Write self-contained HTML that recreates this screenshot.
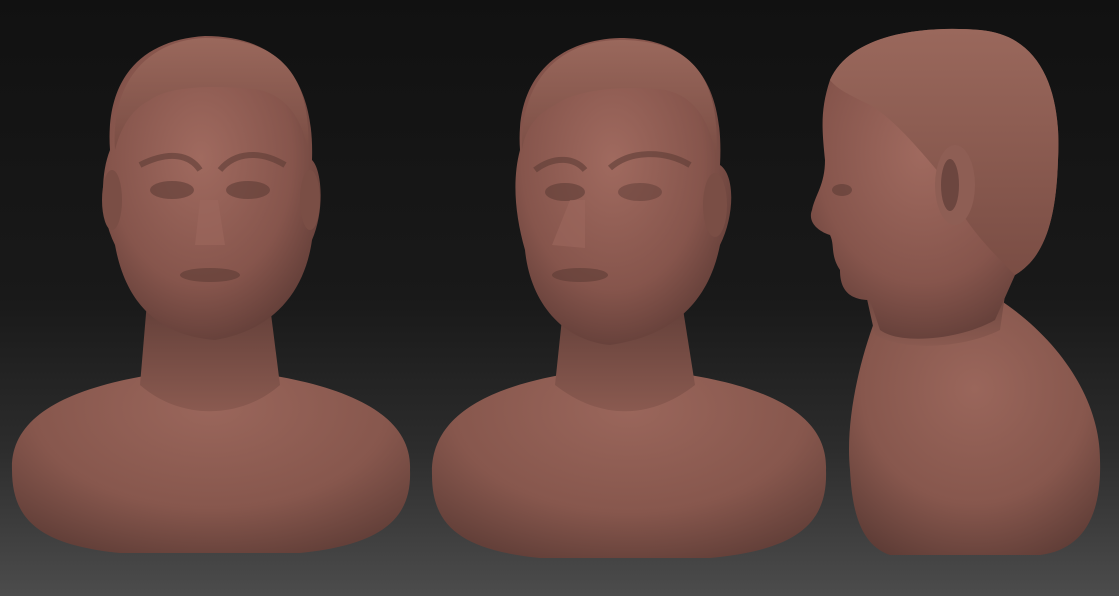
<!DOCTYPE html>
<html><head><meta charset="utf-8"><style>
html,body{margin:0;padding:0;width:1119px;height:596px;overflow:hidden;background:#111}
svg{display:block}
</style></head><body>
<svg width="1119" height="596" viewBox="0 0 1119 596" xmlns="http://www.w3.org/2000/svg">
<defs>
<linearGradient id="bg" x1="0" y1="0" x2="0" y2="1">
<stop offset="0" stop-color="#111"/>
<stop offset="0.5" stop-color="#191919"/>
<stop offset="0.75" stop-color="#2c2c2c"/>
<stop offset="1" stop-color="#4c4c4c"/>
</linearGradient>
<radialGradient id="skin" cx="0.45" cy="0.4" r="0.7">
<stop offset="0" stop-color="#a06a5f"/>
<stop offset="0.6" stop-color="#86554c"/>
<stop offset="1" stop-color="#573732"/>
</radialGradient>
<radialGradient id="body" cx="0.5" cy="0.35" r="0.75">
<stop offset="0" stop-color="#9a665b"/>
<stop offset="0.6" stop-color="#87574d"/>
<stop offset="1" stop-color="#5c3b35"/>
</radialGradient>
<linearGradient id="neck" x1="0" y1="0" x2="0" y2="1">
<stop offset="0" stop-color="#5e3c36"/>
<stop offset="1" stop-color="#8a5a50"/>
</linearGradient>
<linearGradient id="hair" x1="0" y1="0" x2="0" y2="1">
<stop offset="0" stop-color="#9a685c"/>
<stop offset="1" stop-color="#7a4d44"/>
</linearGradient>
</defs>
<rect width="1119" height="596" fill="url(#bg)"/>

<!-- Bust 1 -->
<path d="M12,470 C10,420 60,390 150,375 L160,330 L260,330 L270,375 C360,390 412,420 410,470 C412,520 380,545 300,553 L120,553 C40,545 12,520 12,470Z" fill="url(#body)"/>
<path d="M148,290 L268,290 L280,385 C240,420 180,420 140,385Z" fill="url(#neck)"/>
<path d="M110,150 C105,80 140,40 205,36 C270,36 315,70 312,160 C322,170 325,210 312,240 C305,290 275,330 215,340 C155,335 125,300 115,245 C100,215 100,175 110,150Z" fill="url(#skin)"/>
<path d="M115,150 C110,80 150,40 205,38 C275,38 312,70 308,150 C300,110 280,95 260,90 C220,85 170,85 150,100 C130,110 120,130 115,150Z" fill="url(#hair)"/>
<path d="M140,165 C170,150 190,155 200,170 M220,170 C235,152 260,150 285,165" stroke="#5e3c36" stroke-width="6" fill="none" opacity="0.6"/>
<ellipse cx="172" cy="190" rx="22" ry="9" fill="#5e3c36" opacity="0.6"/>
<ellipse cx="248" cy="190" rx="22" ry="9" fill="#5e3c36" opacity="0.6"/>
<path d="M200,200 L195,245 L225,245 L218,200Z" fill="#9c685d" opacity="0.6"/>
<ellipse cx="210" cy="275" rx="30" ry="7" fill="#5e3c36" opacity="0.6"/>
<ellipse cx="112" cy="200" rx="10" ry="30" fill="#7a4e45"/>
<ellipse cx="310" cy="200" rx="10" ry="30" fill="#7a4e45"/>

<!-- Bust 2 -->
<path d="M432,475 C430,420 480,390 560,375 L575,330 L675,330 L690,375 C780,390 828,420 826,470 C828,525 795,550 710,558 L540,558 C460,550 432,525 432,475Z" fill="url(#body)"/>
<path d="M565,290 L680,290 L695,385 C650,420 600,420 555,385Z" fill="url(#neck)"/>
<path d="M520,150 C515,80 555,40 620,38 C685,38 725,75 720,165 C735,175 735,215 720,245 C710,295 680,335 610,345 C560,340 530,300 525,250 C515,215 512,180 520,150Z" fill="url(#skin)"/>
<path d="M522,150 C520,80 560,40 620,40 C690,40 722,75 716,160 C710,115 690,95 665,90 C620,85 575,90 555,105 C535,115 525,130 522,150Z" fill="url(#hair)"/>
<path d="M535,170 C555,155 575,158 585,170 M610,168 C630,150 665,150 690,165" stroke="#5e3c36" stroke-width="6" fill="none" opacity="0.6"/>
<ellipse cx="565" cy="192" rx="20" ry="9" fill="#5e3c36" opacity="0.6"/>
<ellipse cx="640" cy="192" rx="22" ry="9" fill="#5e3c36" opacity="0.5"/>
<path d="M570,200 L552,245 L585,248 L585,200Z" fill="#9c685d" opacity="0.6"/>
<ellipse cx="580" cy="275" rx="28" ry="7" fill="#5e3c36" opacity="0.6"/>
<ellipse cx="715" cy="205" rx="12" ry="32" fill="#7a4e45"/>

<!-- Bust 3 (profile) -->
<path d="M850,470 C845,420 860,360 875,320 L1000,300 C1060,340 1100,400 1100,460 C1102,520 1080,550 1040,555 L890,555 C860,545 852,510 850,470Z" fill="url(#body)"/>
<path d="M865,290 L1010,260 L1000,330 C960,350 900,350 875,335Z" fill="url(#neck)"/>
<path d="M830,80 C850,35 920,25 980,30 C1040,35 1062,90 1058,160 C1056,230 1040,260 1015,275 L995,320 C960,340 900,345 880,330 L870,300 C845,300 840,285 840,270 C830,255 835,245 830,235 C815,230 808,220 812,210 C815,195 825,185 825,160 C822,130 820,110 830,80Z" fill="url(#skin)"/>
<path d="M830,80 C850,35 920,25 980,30 C1040,35 1062,90 1058,160 C1056,230 1040,260 1015,275 C990,250 960,220 945,180 C920,150 895,120 870,105 C850,95 838,90 830,80Z" fill="url(#hair)"/>
<ellipse cx="955" cy="185" rx="20" ry="40" fill="#8e5e54"/>
<ellipse cx="950" cy="185" rx="9" ry="26" fill="#5e3c36" opacity="0.7"/>
<ellipse cx="842" cy="190" rx="10" ry="6" fill="#5e3c36" opacity="0.6"/>
</svg>
</body></html>
